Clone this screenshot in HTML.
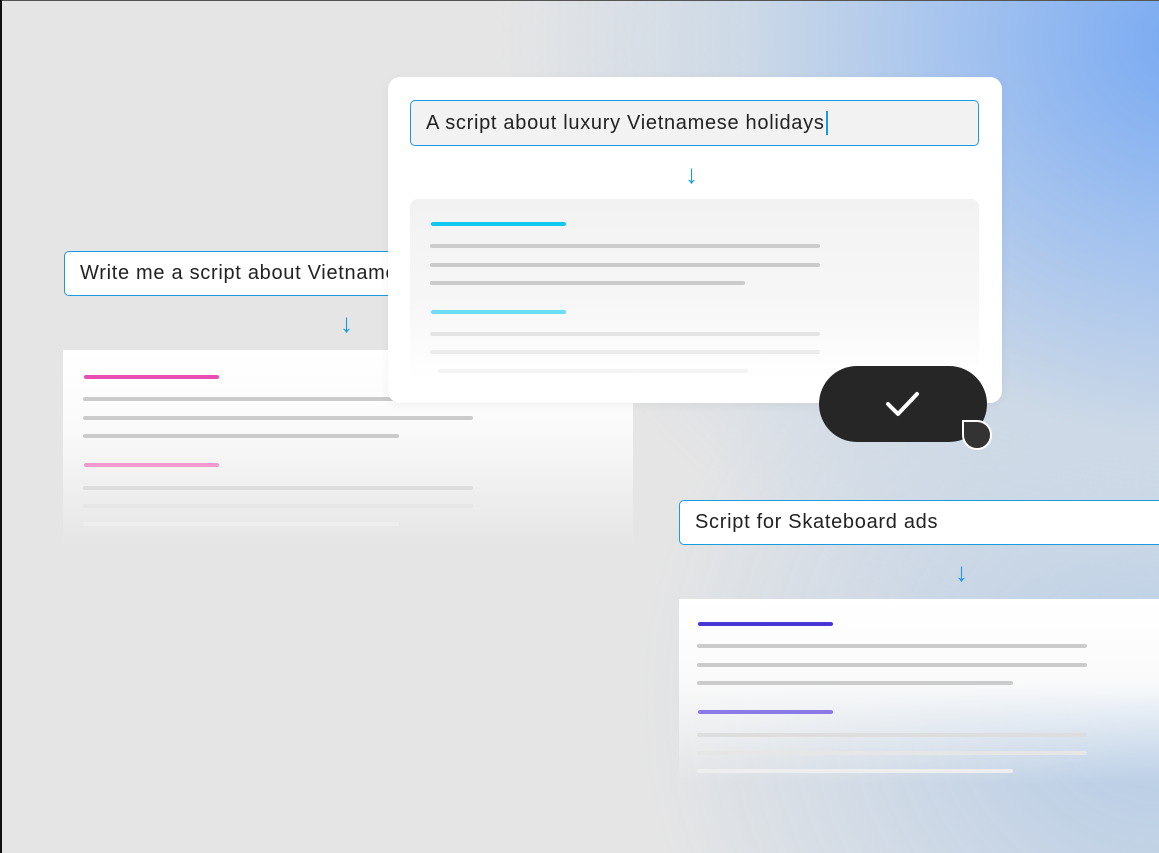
<!DOCTYPE html>
<html><head><style>
*{margin:0;padding:0;box-sizing:border-box}
body{width:1159px;height:853px;overflow:hidden;position:relative;font-family:"Liberation Sans",sans-serif;
background:radial-gradient(ellipse 700px 620px at 1200px 40px,#76a8f2 0%,#a5c3ee 35%,#cdd9e6 65%,rgba(229,229,229,0) 100%),
radial-gradient(ellipse 520px 500px at 1159px 700px,#b4cbe6 0%,rgba(229,229,229,0) 100%),#e5e5e5;}
.a{position:absolute}
.frame{left:0;top:0;width:2px;height:853px;background:#111}
.topb{left:0;top:0;width:1159px;height:1px;background:#555}
.inp{position:absolute;background:#fff;border:1.5px solid #1a9be0;border-radius:5px;font-size:20px;letter-spacing:0.7px;color:#222;padding-left:15px;display:flex;align-items:center;white-space:nowrap;overflow:hidden}
.arr{position:absolute;color:#1a9be0;font-size:26px;line-height:26px}
.ln{position:absolute;height:4px;border-radius:2px;background:#cbcbcb}
</style></head><body>
<div class="a topb"></div>

<!-- left group -->
<div class="inp" style="left:64px;top:251px;width:400px;height:45px">Write me a script about Vietnamese holidays</div>
<div class="arr" style="left:340px;top:310px">↓</div>
<div class="a" style="left:63px;top:350px;width:570px;height:195px;background:linear-gradient(180deg,#fff 0%,#fafafa 40%,rgba(240,240,240,0) 100%);">
  <div class="ln" style="left:21px;top:25px;width:135px;background:#e94fb3"></div>
  <div class="ln" style="left:20px;top:47px;width:390px"></div>
  <div class="ln" style="left:20px;top:66px;width:390px"></div>
  <div class="ln" style="left:20px;top:84px;width:316px"></div>
  <div class="ln" style="left:21px;top:113px;width:135px;background:#f09ad0"></div>
  <div class="ln" style="left:20px;top:136px;width:390px;background:#ddd"></div>
  <div class="ln" style="left:20px;top:154px;width:390px;background:#e6e6e6"></div>
  <div class="ln" style="left:20px;top:172px;width:316px;background:#eee"></div>
</div>

<!-- top card -->
<div class="a" style="left:388px;top:77px;width:614px;height:326px;background:#fff;border-radius:12px;box-shadow:0 2px 10px rgba(0,0,0,.05)">
  <div class="inp" style="left:22px;top:23px;width:569px;height:46px;background:#f2f2f2">A script about luxury Vietnamese holidays<span style="display:inline-block;width:2px;height:24px;background:#1a9be0;margin-left:1px"></span></div>
  <div class="arr" style="left:297px;top:84px">↓</div>
  <div class="a" style="left:22px;top:122px;width:569px;height:180px;border-radius:8px;background:linear-gradient(180deg,#f2f2f2 0%,#f7f7f7 60%,#fff 100%)">
    <div class="ln" style="left:21px;top:23px;width:135px;background:#11c8f3"></div>
    <div class="ln" style="left:20px;top:45px;width:390px"></div>
    <div class="ln" style="left:20px;top:64px;width:390px"></div>
    <div class="ln" style="left:20px;top:82px;width:315px"></div>
    <div class="ln" style="left:21px;top:111px;width:135px;background:#6ddcf7"></div>
    <div class="ln" style="left:20px;top:133px;width:390px;background:#e4e4e4"></div>
    <div class="ln" style="left:20px;top:151px;width:390px;background:#ececec"></div>
    <div class="ln" style="left:28px;top:170px;width:310px;background:#f4f4f4"></div>
  </div>
</div>

<!-- check button -->
<div class="a" style="left:819px;top:366px;width:168px;height:76px;background:#262626;border-radius:38px"></div>
<svg class="a" style="left:884px;top:389px" width="38" height="30" viewBox="0 0 38 30"><path d="M4 15 L14 25 L33 5" stroke="#fff" stroke-width="4" fill="none" stroke-linecap="round" stroke-linejoin="round"/></svg>
<div class="a" style="left:962px;top:420px;width:30px;height:30px;background:#333;border:2.5px solid #fff;border-radius:0 50% 50% 50%"></div>

<!-- right group -->
<div class="inp" style="left:679px;top:500px;width:490px;height:45px">Script for Skateboard ads</div>
<div class="arr" style="left:955px;top:559px">↓</div>
<div class="a" style="left:679px;top:599px;width:480px;height:185px;background:linear-gradient(180deg,#fff 0%,#fafafa 45%,rgba(240,240,240,0) 100%)">
  <div class="ln" style="left:19px;top:23px;width:135px;background:#4a35d6"></div>
  <div class="ln" style="left:18px;top:45px;width:390px"></div>
  <div class="ln" style="left:18px;top:64px;width:390px"></div>
  <div class="ln" style="left:18px;top:82px;width:316px"></div>
  <div class="ln" style="left:19px;top:111px;width:135px;background:#8a79e6"></div>
  <div class="ln" style="left:18px;top:134px;width:390px;background:#ddd"></div>
  <div class="ln" style="left:18px;top:152px;width:390px;background:#e6e6e6"></div>
  <div class="ln" style="left:18px;top:170px;width:316px;background:#eee"></div>
</div>
<div class="a frame"></div>
</body></html>
